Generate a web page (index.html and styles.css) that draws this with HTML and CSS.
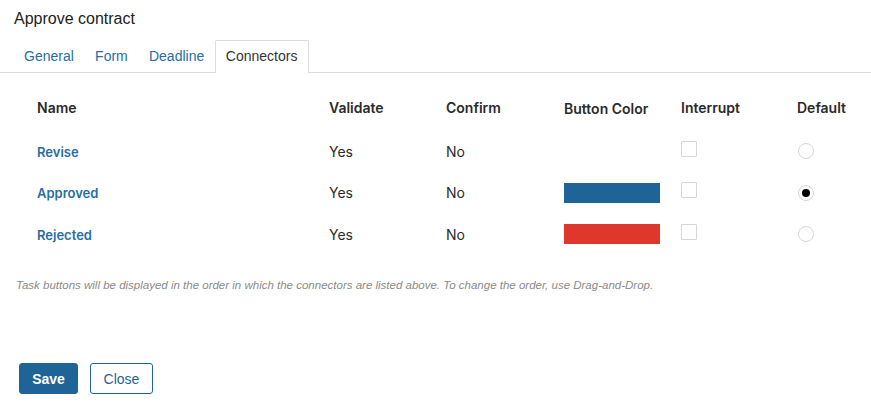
FILE: index.html
```html
<!DOCTYPE html>
<html>
<head>
<meta charset="utf-8">
<link rel="stylesheet" href="styles.css">
</head>
<body>
<div class="dialog">
  <h1 class="title">Approve contract</h1>
  <div class="tabs">
    <span class="tab">General</span>
    <span class="tab">Form</span>
    <span class="tab">Deadline</span>
    <span class="tab active">Connectors</span>
  </div>
  <div class="content">
    <table class="grid">
      <thead>
        <tr>
          <th class="c-name">Name</th>
          <th class="c-val">Validate</th>
          <th class="c-conf">Confirm</th>
          <th class="c-color">Button Color</th>
          <th class="c-int">Interrupt</th>
          <th class="c-def">Default</th>
        </tr>
      </thead>
      <tbody>
        <tr>
          <td><a class="link">Revise</a></td>
          <td>Yes</td>
          <td>No</td>
          <td></td>
          <td><span class="check"></span></td>
          <td><span class="radio"></span></td>
        </tr>
        <tr>
          <td><a class="link">Approved</a></td>
          <td>Yes</td>
          <td>No</td>
          <td><span class="swatch blue"></span></td>
          <td><span class="check"></span></td>
          <td><span class="radio on"></span></td>
        </tr>
        <tr>
          <td><a class="link">Rejected</a></td>
          <td>Yes</td>
          <td>No</td>
          <td><span class="swatch red"></span></td>
          <td><span class="check"></span></td>
          <td><span class="radio"></span></td>
        </tr>
      </tbody>
    </table>
    <p class="note">Task buttons will be displayed in the order in which the connectors are listed above. To change the order, use Drag-and-Drop.</p>
    <div class="actions">
      <button class="btn primary">Save</button>
      <button class="btn secondary">Close</button>
    </div>
  </div>
</div>
</body>
</html>
```

FILE: styles.css
```css
html, body {
  margin: 0;
  padding: 0;
  background: #fff;
}
body {
  font-family: "Liberation Sans", Arial, sans-serif;
  color: #222;
}
.dialog {
  width: 871px;
}
.title {
  margin: 0;
  padding: 9px 0 0 14px;
  font-size: 16px;
  font-weight: normal;
  line-height: 19px;
  color: #222;
}
.tabs {
  display: flex;
  margin-top: 12px;
  padding-left: 13.5px;
  border-bottom: 1px solid #dcdcdc;
  height: 32px;
}
.tab {
  padding: 1px 10.6px 0;
  font-size: 14px;
  color: #266ea6;
  height: 32px;
  box-sizing: border-box;
  line-height: 30px;
}
.tab.active {
  color: #333;
  background: #fff;
  border: 1px solid #dcdcdc;
  border-bottom: none;
  border-radius: 2px 2px 0 0;
  padding: 0 11px 0 10px;
  height: 33px;
  margin-bottom: -1px;
}
.content {
  padding: 0 19px;
}
.grid {
  border-collapse: collapse;
  table-layout: fixed;
  width: 833px;
  margin-top: 13px;
  font-family: Inter, "Liberation Sans", sans-serif;
  font-size: 14px;
}
.grid th {
  text-align: left;
  font-weight: 600;
  color: #2b2b2b;
  padding: 0 0 2px 18px;
  height: 44px;
  box-sizing: border-box;
  vertical-align: middle;
}
.grid th.c-color {
  padding-top: 3px;
}
.grid td {
  padding: 0 0 0 18px;
  height: 41.5px;
  color: #2b2b2b;
  vertical-align: middle;
}
.grid tbody tr:first-child td {
  height: 42px;
}
.c-name { width: 292px; }
.c-val { width: 117px; }
.c-conf { width: 118px; }
.c-color { width: 117px; }
.c-int { width: 116px; }
.c-def { width: 73px; }
.link {
  color: #266ea6;
  font-weight: 600;
  font-size: 13px;
}
.swatch {
  display: block;
  width: 96px;
  height: 20px;
}
.swatch.blue { background: #1f6496; }
.swatch.red { background: #e0372c; }
.check {
  display: block;
  width: 14px;
  height: 14px;
  border: 1px solid #d6d6d6;
  border-radius: 1px;
  margin-top: -5px;
}
.radio {
  display: block;
  position: relative;
  width: 14px;
  height: 14px;
  border: 1px solid #d6d6d6;
  border-radius: 50%;
  margin-left: 1px;
}
.radio.on::after {
  content: "";
  position: absolute;
  left: 3px;
  top: 3px;
  width: 8px;
  height: 8px;
  border-radius: 50%;
  background: #000;
}
.note {
  margin: 24px 0 0 -3px;
  font-size: 11.5px;
  font-style: italic;
  color: #8a8a8a;
}
.actions {
  display: flex;
  gap: 12px;
  margin-top: 72px;
}
.btn {
  font-family: "Liberation Sans", Arial, sans-serif;
  font-size: 14px;
  height: 31px;
  border-radius: 3px;
  box-sizing: border-box;
  cursor: pointer;
}
.btn.primary {
  background: #1f6496;
  border: 1px solid #1f6496;
  color: #fff;
  font-weight: bold;
  width: 59px;
}
.btn.secondary {
  background: #fff;
  border: 1px solid #1f6496;
  color: #1f6496;
  width: 63px;
}
```
